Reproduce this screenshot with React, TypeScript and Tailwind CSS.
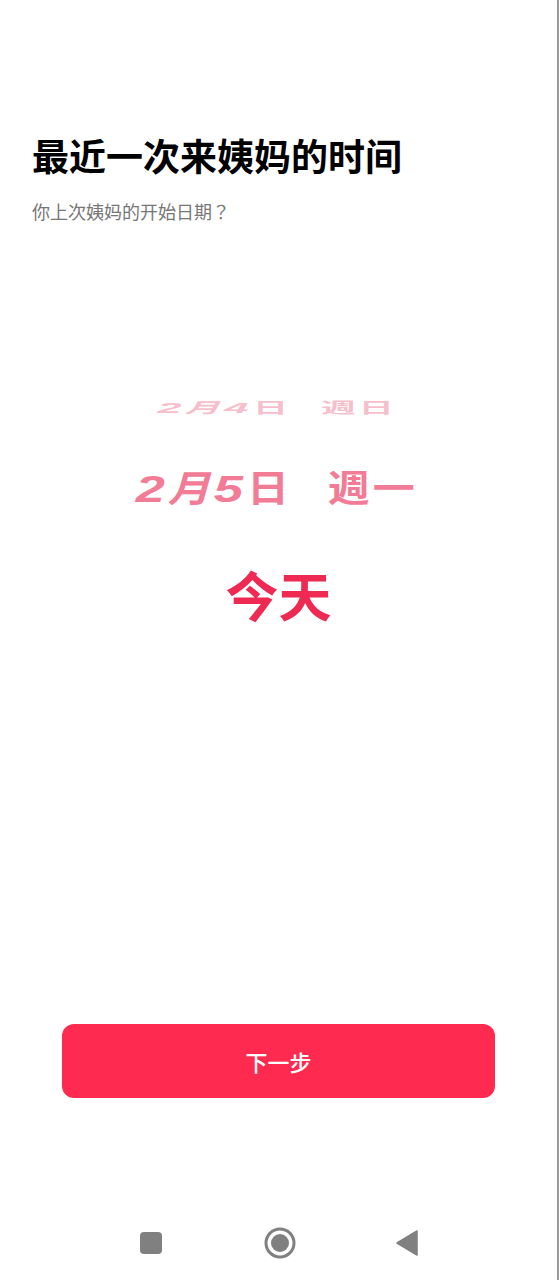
import React from 'react'

const cjk = { fontFamily: '"Noto Sans CJK SC", "Noto Sans", sans-serif' }
const latin = { fontFamily: '"Liberation Sans", Arial, sans-serif' }

function WheelItem({
  month,
  day,
  week,
  className,
}: {
  month: string
  day: string
  week: string
  className: string
}) {
  return (
    <div className={className}>
      <span className="mr-[2px] inline-block scale-x-[1.25] italic font-black" style={latin}>
        {month}
      </span>
      <span className="italic">月</span>
      <span className="mx-[4px] inline-block scale-x-[1.25] italic font-black" style={latin}>
        {day}
      </span>
      <span>日</span>
      <span className="ml-[0.85em]">{week}</span>
    </div>
  )
}

export default function App() {
  return (
    <div
      className="relative flex h-[1280px] w-[559px] flex-col overflow-hidden border-r-2 border-[#9a9a9a] bg-white"
      style={cjk}
    >
      {/* Header */}
      <div className="px-8 pt-[132px]">
        <h1 className="text-[37px] font-bold leading-[46px] text-black">最近一次来姨妈的时间</h1>
        <p
          className="mt-[20px] text-[18px] leading-[27px] text-[#777777]"
          style={{ fontFamily: '"Noto Sans CJK JP", "Noto Sans CJK SC", sans-serif' }}
        >
          你上次姨妈的开始日期？
        </p>
      </div>

      {/* Date wheel */}
      <div className="mt-[173px] flex flex-col items-center">
        <div className="flex h-[20px] items-center justify-center">
          <WheelItem
            month="2"
            day="4"
            week="週日"
            className="origin-center scale-y-[0.42] whitespace-nowrap text-[35px] font-bold tracking-[3px] text-[#f7bfcc]"
          />
        </div>
        <div className="mt-[47px] flex h-[44px] items-center justify-center">
          <WheelItem
            month="2"
            day="5"
            week="週一"
            className="origin-center scale-y-[0.88] whitespace-nowrap text-[42px] font-bold tracking-[3px] text-[#f27b96]"
          />
        </div>
        <div className="mt-[57px] flex h-[56px] items-center justify-center">
          <span className="text-[53px] font-bold leading-none text-[#ee2a52]">今天</span>
        </div>
      </div>

      <div className="flex-1" />

      {/* Next button */}
      <div className="px-[62px]">
        <button className="flex h-[74px] w-full items-center justify-center rounded-[12px] bg-[#ff2a50] text-[22px] font-medium text-white">
          下一步
        </button>
      </div>

      {/* System nav */}
      <div className="mb-[23px] mt-[131px] flex h-[28px] items-center pl-[140px]">
        <div className="h-[22px] w-[22px] rounded-[4px] bg-[#808080]" />
        <svg className="ml-[102px]" width="32" height="32" viewBox="0 0 32 32">
          <circle cx="16" cy="16" r="14" fill="none" stroke="#808080" strokeWidth="3" />
          <circle cx="16" cy="16" r="9" fill="#808080" />
        </svg>
        <svg className="ml-[99px]" width="24" height="26" viewBox="0 0 24 26">
          <path d="M22 1 L22 25 L2 13 Z" fill="#808080" strokeLinejoin="round" stroke="#808080" strokeWidth="1.5" />
        </svg>
      </div>
    </div>
  )
}
